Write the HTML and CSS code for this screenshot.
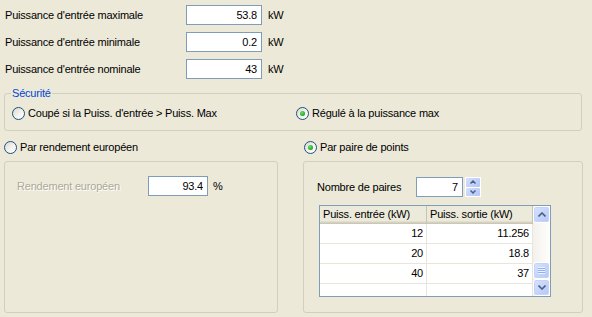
FILE: index.html
```html
<!DOCTYPE html>
<html lang="fr">
<head>
    <meta charset="UTF-8">
    <title>Onduleur - Puissance</title>
    <link rel="stylesheet" href="styles.css">
</head>
<body>
    <div class="power">
        <label>Puissance d'entrée maximale</label>
        <input class="field" type="text" value="53.8">
        <span class="unit">kW</span>

        <label>Puissance d'entrée minimale</label>
        <input class="field" type="text" value="0.2">
        <span class="unit">kW</span>

        <label>Puissance d'entrée nominale</label>
        <input class="field" type="text" value="43">
        <span class="unit">kW</span>
    </div>

    <fieldset class="security">
        <legend>Sécurité</legend>
        <div class="radio-row">
            <label class="radio"><span class="bullet"></span>Coupé si la Puiss. d'entrée &gt; Puiss. Max</label>
            <label class="radio on"><span class="bullet"></span>Régulé à la puissance max</label>
        </div>
    </fieldset>

    <div class="modes">
        <div class="mode mode-left">
            <label class="radio"><span class="bullet"></span>Par rendement européen</label>
            <div class="box">
                <div class="line">
                    <span class="dim">Rendement européen</span>
                    <input class="field eff" type="text" value="93.4" disabled>
                    <span class="unit">%</span>
                </div>
            </div>
        </div>

        <div class="mode mode-right">
            <label class="radio on"><span class="bullet"></span>Par paire de points</label>
            <div class="box">
                <div class="line">
                    <span class="pairs-label">Nombre de paires</span>
                    <input class="field pairs" type="text" value="7">
                    <div class="spin">
                        <span class="spin-btn">
                            <svg width="6" height="4" viewBox="0 0 6 4"><path d="M0.5 3.5 L3 1 L5.5 3.5" stroke="#4D6185" stroke-width="1.5" fill="none"/></svg>
                        </span>
                        <span class="spin-btn">
                            <svg width="6" height="4" viewBox="0 0 6 4"><path d="M0.5 0.5 L3 3 L5.5 0.5" stroke="#4D6185" stroke-width="1.5" fill="none"/></svg>
                        </span>
                    </div>
                </div>

                <div class="table-wrap">
                    <div class="grid">
                        <div class="th">Puiss. entrée (kW)</div>
                        <div class="th">Puiss. sortie (kW)</div>
                        <div class="td">12</div>
                        <div class="td">11.256</div>
                        <div class="td">20</div>
                        <div class="td">18.8</div>
                        <div class="td">40</div>
                        <div class="td">37</div>
                        <div class="td"></div>
                        <div class="td"></div>
                    </div>
                    <div class="vscroll">
                        <span class="sbtn">
                            <svg width="8" height="5" viewBox="0 0 8 5"><path d="M0.5 4.5 L4 1 L7.5 4.5" stroke="#4D6185" stroke-width="1.6" fill="none"/></svg>
                        </span>
                        <span class="track"></span>
                        <span class="sbtn thumb">
                            <span class="grip"></span>
                        </span>
                        <span class="sbtn">
                            <svg width="8" height="5" viewBox="0 0 8 5"><path d="M0.5 0.5 L4 4 L7.5 0.5" stroke="#4D6185" stroke-width="1.6" fill="none"/></svg>
                        </span>
                    </div>
                </div>
            </div>
        </div>
    </div>
</body>
</html>
```

FILE: styles.css
```css
* {
    margin: 0;
    padding: 0;
    box-sizing: border-box;
}

body {
    font-family: 'Liberation Sans', Arial, sans-serif;
    font-size: 11px;
    letter-spacing: -0.2px;
    color: #000;
    background: #ECE9D8;
    width: 592px;
    height: 317px;
    overflow: hidden;
}

/* champs de puissance */
.power {
    display: grid;
    grid-template-columns: 181px 76px auto;
    grid-auto-rows: 20px;
    row-gap: 7px;
    align-items: center;
    padding: 5px 0 0 5px;
}

.field {
    height: 20px;
    border: 1px solid #7F9DB9;
    background: #fff;
    color: #000;
    font: inherit;
    letter-spacing: inherit;
    text-align: right;
    padding: 0 4px 0 0;
    outline: none;
}

.unit {
    padding-left: 6px;
}

/* sécurité */
.security {
    margin: 8px 0 0 4px;
    width: 578px;
    border: 1px solid #D0D0BF;
    border-radius: 3px;
    padding: 7px 7px 10px 7px;
}

.security legend {
    color: #0046D5;
    line-height: 12px;
    padding: 0 1px;
    margin-left: -1px;
}

.radio-row {
    display: grid;
    grid-template-columns: 284px auto;
}

.radio {
    display: flex;
    align-items: center;
    gap: 3px;
    height: 14px;
    line-height: 14px;
}

.bullet {
    flex: none;
    width: 13px;
    height: 13px;
    border: 1px solid #1C5180;
    border-radius: 50%;
    background: linear-gradient(135deg, #DCD9CB 0%, #F4F3EE 55%, #fff 100%);
    display: grid;
    place-items: center;
}

.radio.on .bullet::after {
    content: '';
    width: 5px;
    height: 5px;
    border-radius: 50%;
    background: radial-gradient(circle at 40% 35%, #6FE06F 0%, #2DB12D 55%, #1A8E1A 100%);
}

/* modes */
.modes {
    display: flex;
    gap: 25px;
    margin: 9px 0 0 4px;
}

.mode-left {
    width: 274px;
}

.mode-right {
    width: 280px;
}

.mode-right .radio {
    margin-left: 1px;
}

.box {
    margin-top: 7px;
    height: 152px;
    border: 1px solid #D0D0BF;
    border-radius: 3px;
}

.mode-left .box {
    padding: 14px 0 0 12px;
}

.mode-right .box {
    padding: 15px 0 0 13px;
}

.line {
    display: flex;
    align-items: center;
    height: 20px;
}

.dim {
    width: 131px;
    color: #ACA899;
    text-shadow: 1px 1px 0 #fff;
}

.field.eff {
    width: 60px;
}

.line .unit {
    padding-left: 5px;
}

.pairs-label {
    width: 99px;
}

.field.pairs {
    width: 47px;
}

.spin {
    margin-left: 2px;
    width: 16px;
    height: 20px;
    display: flex;
    flex-direction: column;
    border: 1px solid #fff;
    background: #fff;
    gap: 1px;
}

.spin-btn {
    flex: 1;
    display: grid;
    place-items: center;
    border-radius: 1px;
    background: linear-gradient(135deg, #D3E0FD 0%, #B2C6F6 100%);
}

/* tableau des paires */
.table-wrap {
    margin: 8px 0 0 2px;
    width: 232px;
    height: 92px;
    border: 1px solid #7F9DB9;
    background: #fff;
    display: flex;
}

.grid {
    display: grid;
    grid-template-columns: 107px 106px;
    grid-template-rows: 18px;
    grid-auto-rows: 20px;
    overflow: hidden;
}

.th {
    background: #EBEADB;
    box-shadow: inset 0 -1px #CBC7B8, inset 0 -2px #D6D2C2, inset 0 -3px #E2DECD;
    border-right: 1px solid #C7C5B2;
    padding-left: 3px;
    line-height: 17px;
    white-space: nowrap;
}

.td {
    border-right: 1px solid #E8E6DA;
    border-bottom: 1px solid #E8E6DA;
    text-align: right;
    padding-right: 3px;
    line-height: 19px;
}

.vscroll {
    width: 17px;
    display: flex;
    flex-direction: column;
    background: linear-gradient(to right, #F3F1EC, #FEFEFB);
}

.sbtn {
    flex: none;
    height: 17px;
    display: grid;
    place-items: center;
    border: 1px solid #fff;
    border-radius: 3px;
    background: linear-gradient(135deg, #D8E3FE 0%, #B4C7F5 100%);
    box-shadow: inset 0 0 0 1px #C3D3FD;
}

.track {
    flex: 1;
}

.grip {
    width: 7px;
    height: 7px;
    background: repeating-linear-gradient(to bottom, #EEF4FE 0 1px, #8CB0F8 1px 2px);
}
```
